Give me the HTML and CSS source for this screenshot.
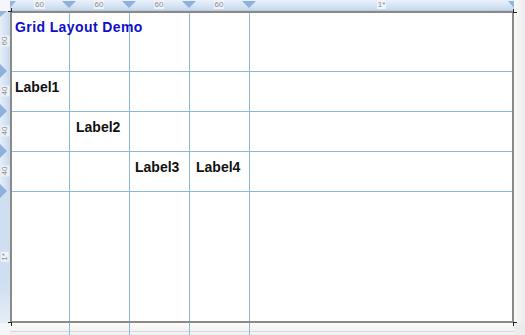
FILE: index.html
```html
<!DOCTYPE html>
<html lang="en">
<head>
  <meta charset="UTF-8" />
  <title>Grid Layout Demo</title>
  <link rel="stylesheet" href="styles.css">
</head>
<body>

  <div class="designer">
    <div class="corner"></div>

    <div class="ruler-top">
      <div class="seg seg-first"><span>60</span></div>
      <div class="seg"><span>60</span></div>
      <div class="seg"><span>60</span></div>
      <div class="seg"><span>60</span></div>
      <div class="seg seg-star"><span>1*</span></div>
    </div>

    <div class="ruler-left">
      <div class="vseg vseg-first"><span>60</span></div>
      <div class="vseg"><span>40</span></div>
      <div class="vseg"><span>40</span></div>
      <div class="vseg"><span>40</span></div>
      <div class="vseg vseg-star"><span>1*</span></div>
    </div>

    <div class="frame">
      <div class="grid">
        <div class="title">Grid Layout Demo</div>
        <div class="lbl lbl1">Label1</div>
        <div class="lbl lbl2">Label2</div>
        <div class="lbl lbl3">Label3</div>
        <div class="lbl lbl4">Label4</div>
      </div>
      <i class="tick tick-tl"></i>
      <i class="tick tick-tr"></i>
      <i class="tick tick-bl"></i>
      <i class="tick tick-br"></i>
    </div>

    <div class="side"></div>
    <div class="under-left"></div>
    <div class="under"></div>
    <div class="under-right"></div>
  </div>

</body>
</html>
```

FILE: styles.css
```css
html, body {
  margin: 0;
  padding: 0;
}
body {
  width: 525px;
  height: 335px;
  overflow: hidden;
  background: #f2f2f2;
  font-family: "Liberation Sans", Arial, sans-serif;
}
.designer {
  display: grid;
  grid-template-columns: 10px 504px 11px;
  grid-template-rows: 11px 312px 12px;
}
.corner {
  background: #f4f6f9;
}

/* top ruler */
.ruler-top {
  display: flex;
  position: relative;
  background: linear-gradient(#e9f1fa, #d4e3f4 60%, #c6d9ee);
  border-bottom: 1px solid #b7cbe2;
  box-sizing: border-box;
}
.ruler-top::before {
  content: "";
  position: absolute;
  left: 0;
  top: 1px;
  border-top: 7px solid #93b6de;
  border-right: 6px solid transparent;
}
.ruler-top::after {
  content: "";
  position: absolute;
  right: 0;
  top: 1px;
  border-top: 7px solid #93b6de;
  border-left: 6px solid transparent;
}
.seg {
  width: 60px;
  position: relative;
  text-align: center;
  font-size: 8px;
  line-height: 10px;
  color: #8c8c8c;
}
.seg span {
  background: #eef3f9;
  padding: 0 1px;
}
.seg-first {
  width: 59px;
}
.seg-star {
  flex: 1;
}
.seg::after {
  content: "";
  position: absolute;
  right: -7px;
  top: 1px;
  border-top: 7px solid #8db1dc;
  border-left: 7px solid transparent;
  border-right: 7px solid transparent;
  z-index: 1;
}
.seg-star::after {
  display: none;
}

/* left ruler */
.ruler-left {
  display: flex;
  flex-direction: column;
  position: relative;
  background: linear-gradient(90deg, #e6eff9, #cfdff1 70%, #c3d7ed);
}
.ruler-left::before {
  content: "";
  position: absolute;
  left: 0;
  top: 0;
  border-left: 7px solid #93b6de;
  border-bottom: 6px solid transparent;
}
.vseg {
  height: 40px;
  position: relative;
  display: flex;
  align-items: center;
  justify-content: center;
  font-size: 8px;
  color: #8c8c8c;
}
.vseg span {
  transform: rotate(-90deg);
  background: #eef3f9;
  padding: 0 1px;
  line-height: 8px;
}
.vseg-first {
  height: 60px;
}
.vseg-star {
  flex: 1;
  background: linear-gradient(#cfdff1 70%, #e4eef8);
}
.vseg::after {
  content: "";
  position: absolute;
  left: 0;
  bottom: -7px;
  border-left: 7px solid #8db1dc;
  border-top: 7px solid transparent;
  border-bottom: 7px solid transparent;
  z-index: 1;
}
.vseg-star::after {
  display: none;
}

/* the design surface */
.frame {
  position: relative;
  border: 2px solid #8d8a84;
  background: #fff;
}
.grid {
  display: grid;
  height: 100%;
  grid-template-columns: 58px 60px 60px 60px 1fr;
  grid-template-rows: 59px 40px 40px 40px 1fr;
  background:
    linear-gradient(#8cbbd9, #8cbbd9) 57px 0 / 1px 100% no-repeat,
    linear-gradient(#8cbbd9, #8cbbd9) 117px 0 / 1px 100% no-repeat,
    linear-gradient(#8cbbd9, #8cbbd9) 177px 0 / 1px 100% no-repeat,
    linear-gradient(#8cbbd9, #8cbbd9) 237px 0 / 1px 100% no-repeat,
    linear-gradient(#8cbbd9, #8cbbd9) 0 58px / 100% 1px no-repeat,
    linear-gradient(#8cbbd9, #8cbbd9) 0 98px / 100% 1px no-repeat,
    linear-gradient(#8cbbd9, #8cbbd9) 0 138px / 100% 1px no-repeat,
    linear-gradient(#8cbbd9, #8cbbd9) 0 178px / 100% 1px no-repeat;
}
.title {
  grid-column: 1 / 5;
  grid-row: 1;
  padding: 6px 0 0 3px;
  font-size: 14px;
  font-weight: bold;
  line-height: 16px;
  letter-spacing: 0.4px;
  color: #0f0fc8;
  white-space: nowrap;
}
.lbl {
  padding: 7px 0 0 6px;
  font-size: 14px;
  font-weight: bold;
  line-height: 16px;
  color: #111;
}
.lbl1 {
  grid-column: 1;
  grid-row: 2;
  padding-left: 3px;
}
.lbl2 {
  grid-column: 2;
  grid-row: 3;
}
.lbl3 {
  grid-column: 3;
  grid-row: 4;
  padding-left: 5px;
}
.lbl4 {
  grid-column: 4;
  grid-row: 4;
}

.tick {
  position: absolute;
  width: 3px;
  height: 3px;
  border: 0 solid #222;
}
.tick-tl {
  left: -4px;
  top: -5px;
  border-right-width: 1px;
  border-bottom-width: 1px;
}
.tick-tr {
  right: -5px;
  top: -4px;
  border-left-width: 1px;
  border-bottom-width: 1px;
}
.tick-bl {
  left: -4px;
  bottom: -5px;
  border-right-width: 1px;
  border-top-width: 1px;
}
.tick-br {
  right: -5px;
  bottom: -5px;
  border-left-width: 1px;
  border-top-width: 1px;
}

.side {
  grid-column: 3;
  grid-row: 1 / 3;
  background: linear-gradient(90deg, #fafafa, #ebebeb);
}
.under-left {
  background: #f4f6f9;
}
.under {
  background:
    linear-gradient(#8cbbd9, #8cbbd9) 59px 0 / 1px 100% no-repeat,
    linear-gradient(#8cbbd9, #8cbbd9) 119px 0 / 1px 100% no-repeat,
    linear-gradient(#8cbbd9, #8cbbd9) 179px 0 / 1px 100% no-repeat,
    linear-gradient(#8cbbd9, #8cbbd9) 239px 0 / 1px 100% no-repeat,
    linear-gradient(#d9d9d9, #d9d9d9) 0 8px / 100% 1px no-repeat,
    linear-gradient(#fbfbfb, #f0f0f0);
}
.under-right {
  background: #ececec;
}
```
